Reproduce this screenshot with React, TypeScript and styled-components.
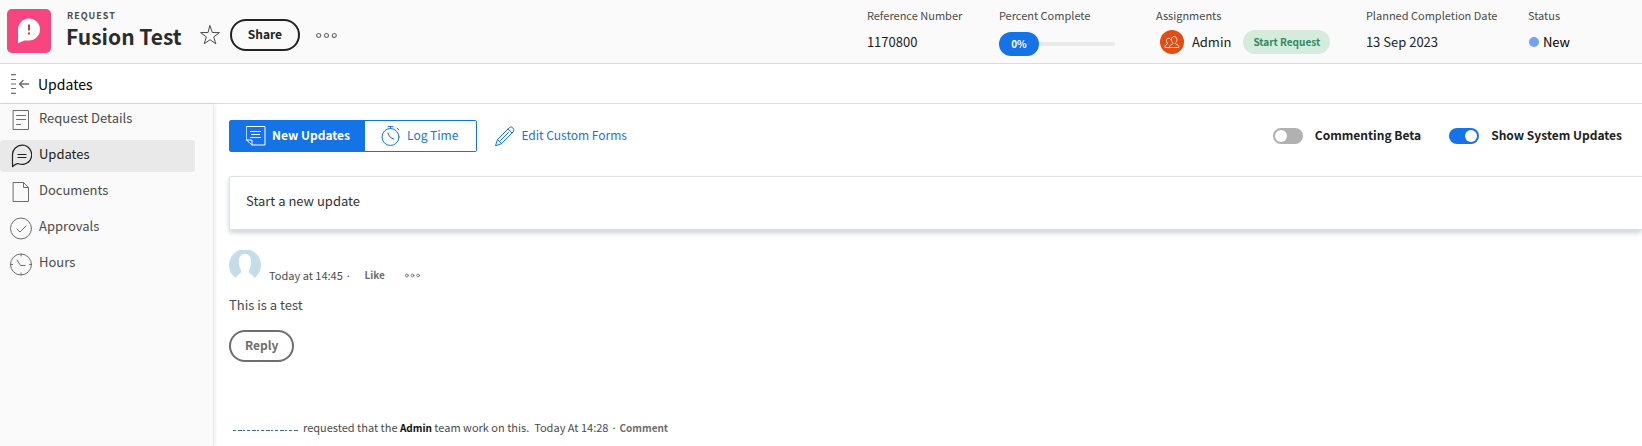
import React from "react";
import styled, { createGlobalStyle } from "styled-components";

const GlobalStyle = createGlobalStyle`
  *, *::before, *::after { box-sizing: border-box; }
  body {
    margin: 0;
    background: #fff;
    color: #4b4b4b;
    font: 13px/20px "Noto Sans CJK JP", "Noto Sans", sans-serif;
  }
  h1, h2, p, ul, dl, dd { margin: 0; padding: 0; }
  ul { list-style: none; }
  button {
    margin: 0;
    padding: 0;
    border: 0;
    background: none;
    color: inherit;
    font: inherit;
    cursor: pointer;
  }
  a { color: inherit; text-decoration: none; }
  svg { display: block; flex: none; }
`;

const Page = styled.div`
  display: flex;
  flex-direction: column;
  min-height: 100vh;
  overflow-x: hidden;
`;

const Header = styled.header`
  display: flex;
  align-items: flex-start;
  justify-content: space-between;
  height: 64px;
  padding: 0 72px 0 7px;
  background: #fafafa;
  border-bottom: 1px solid #dcdcdc;
`;

const Identity = styled.div`
  display: flex;
  align-items: center;
  height: 64px;
`;

const Logo = styled.span`
  display: grid;
  place-items: center;
  width: 44px;
  height: 44px;
  margin: 0 15px 2px 0;
  border-radius: 5px;
  background: #f6457f;
`;

const TitleBlock = styled.div`
  padding-bottom: 5px;
  white-space: nowrap;
`;

const Kind = styled.p`
  padding-left: 1px;
  font-size: 9px;
  font-weight: 700;
  line-height: 14px;
  letter-spacing: 1px;
`;

const Title = styled.h1`
  color: #2c2c2c;
  font-size: 21px;
  font-weight: 700;
  line-height: 27px;
`;

const Actions = styled.div`
  display: flex;
  align-items: center;
  padding-top: 6px;
`;

const IconButton = styled.button<{ $gap: number }>`
  display: grid;
  place-items: center;
  min-height: 14px;
  margin-left: ${(p) => p.$gap}px;
  color: #6e6e6e;
`;

const PillButton = styled.button<{ $strong?: boolean }>`
  height: 32px;
  margin-left: ${(p) => (p.$strong ? 10 : 0)}px;
  padding: 0 ${(p) => (p.$strong ? 16 : 14)}px 2px;
  border: 2px solid ${(p) => (p.$strong ? "#222" : "#6e6e6e")};
  border-radius: 16px;
  color: ${(p) => (p.$strong ? "#222" : "#6e6e6e")};
  font-size: 12px;
  font-weight: 700;
`;

const Facts = styled.dl`
  display: flex;
  padding-top: 5px;
  white-space: nowrap;
`;

const Fact = styled.div<{ $width?: number }>`
  width: ${(p) => (p.$width ? `${p.$width}px` : "auto")};
`;

const FactLabel = styled.dt`
  font-size: 11px;
  line-height: 20px;
`;

const FactValue = styled.dd`
  display: flex;
  align-items: center;
  height: 34px;
  color: #222;
`;

const Progress = styled.div`
  display: flex;
  align-items: center;
  width: 116px;
  padding-top: 4px;
`;

const ProgressBadge = styled.span`
  width: 40px;
  height: 24px;
  border-radius: 12px;
  background: #1473e6;
  color: #fff;
  font-size: 10px;
  font-weight: 700;
  line-height: 23px;
  text-align: center;
`;

const ProgressTrack = styled.span`
  flex: 1;
  height: 4px;
  border-radius: 0 2px 2px 0;
  background: #e9e9e9;
`;

const TeamAvatar = styled.span`
  display: grid;
  place-items: center;
  width: 24px;
  height: 24px;
  margin: 0 8px 0 4px;
  border-radius: 50%;
  background: #e34c13;
  color: #fff;
`;

const StartButton = styled.button`
  height: 24px;
  margin-left: 12px;
  padding: 0 10px;
  border-radius: 12px;
  background: #d5ecdc;
  color: #2d8a68;
  font-size: 10px;
  font-weight: 700;
`;

const StatusDot = styled.span`
  width: 10px;
  height: 10px;
  margin: 0 4px 0 1px;
  border-radius: 50%;
  background: #74a1f7;
`;

const StatusName = styled.span`
  color: #000;
`;

const SectionBar = styled.div`
  display: flex;
  align-items: center;
  height: 40px;
  padding-left: 10px;
  border-bottom: 1px solid #dcdcdc;
  color: #6e6e6e;
`;

const SectionTitle = styled.h2`
  margin-left: 8px;
  color: #000;
  font-size: 14px;
  font-weight: 400;
`;

const Body = styled.div`
  display: flex;
  flex: 1;
`;

const Sidebar = styled.nav`
  width: 214px;
  flex: none;
  background: #fafafa;
  border-right: 1px solid #eaeaea;
  box-shadow: 1px 0 4px rgba(0, 0, 0, 0.08);
`;

const NavLink = styled.a<{ $active?: boolean }>`
  display: flex;
  align-items: center;
  gap: 7px;
  height: 32px;
  margin: 0 18px 4px 0;
  padding-left: 9px;
  border-radius: 4px;
  background: ${(p) => (p.$active ? "#e9e9e9" : "none")};
  color: ${(p) => (p.$active ? "#222" : "#4b4b4b")};

  svg { color: ${(p) => (p.$active ? "#222" : "#6e6e6e")}; }
  span { padding-bottom: 5px; }
`;

const Main = styled.main`
  flex: 1;
  min-width: 0;
  padding: 16px 0 0 15px;
`;

const Toolbar = styled.div`
  display: flex;
  align-items: center;
  height: 32px;
  padding-right: 20px;
  font-size: 12px;
  white-space: nowrap;
`;

const Tabs = styled.div`
  display: flex;
  border: 1px solid #1473e6;
  border-radius: 2px;
`;

const Tab = styled.button<{ $active?: boolean }>`
  display: flex;
  align-items: center;
  gap: 6px;
  height: 30px;
  padding: 0 ${(p) => (p.$active ? 15 : 18)}px 0 16px;
  background: ${(p) => (p.$active ? "#1473e6" : "#fff")};
  color: ${(p) => (p.$active ? "#fff" : "#1473e6")};
  font-weight: ${(p) => (p.$active ? 700 : 400)};

  span { padding-bottom: 2px; }
`;

const EditLink = styled.a`
  display: flex;
  align-items: center;
  gap: 6px;
  margin: 0 auto 0 18px;
  color: #1473e6;

  span { padding-bottom: 2px; }
`;

const ToggleLabel = styled.label`
  display: flex;
  align-items: center;
  gap: 12px;
  margin-left: 28px;
  color: #222;
  font-weight: 700;

  span { padding-bottom: 2px; }
`;

const Switch = styled.input`
  appearance: none;
  display: flex;
  width: 30px;
  height: 16px;
  margin: 0;
  padding: 2px;
  border-radius: 8px;
  background: #b1b1b1;

  &::before {
    content: "";
    width: 12px;
    height: 12px;
    border-radius: 50%;
    background: #fff;
  }
  &:checked { justify-content: flex-end; background: #1473e6; }
`;

const UpdateInput = styled.input`
  display: block;
  width: 100%;
  height: 54px;
  margin-top: 24px;
  padding: 0 16px 6px;
  border: 1px solid #dfe2e4;
  border-right: 0;
  border-radius: 2px 0 0 2px;
  outline: 0;
  background: #fff;
  box-shadow: 0 3px 5px #cdd4d9;
  color: #323232;
  font: inherit;

  &::placeholder { color: #323232; opacity: 1; }
`;

const Comment = styled.article`
  margin-top: 20px;
`;

const CommentHeader = styled.div`
  display: flex;
  align-items: flex-end;
  height: 32px;
  font-size: 11px;
  line-height: 14px;
`;

const CommentTime = styled.time`
  margin-left: 8px;
`;

const TextButton = styled.button<{ $gap: number }>`
  margin-left: ${(p) => p.$gap}px;
  color: #6e6e6e;
  font-size: 10px;
  font-weight: 700;
`;

const CommentText = styled.p`
  margin: 13px 0 15px;
`;

const SystemUpdate = styled.p`
  display: flex;
  margin-top: 55px;
  font-size: 11px;
  white-space: pre;

  strong { color: #111; font-size: 10px; }
`;

const HiddenName = styled.a`
  width: 69px;
  margin-right: 5px;
  padding: 13px 0 0 3px;
  color: #35708f;
`;

const line = { fill: "none", stroke: "currentColor", strokeLinecap: "round", strokeLinejoin: "round" } as const;

const MoreIcon = ({ width }: { width: number }) => (
  <svg width={width} height={width / 3} viewBox="0 0 21 7" {...line} strokeWidth="1.2">
    <circle cx="2.7" cy="3.5" r="2" /><circle cx="10.5" cy="3.5" r="2" /><circle cx="18.3" cy="3.5" r="2" />
  </svg>
);

const RequestIcon = () => (
  <svg width="24" height="26" viewBox="0 0 24 26">
    <path d="M12 0.5a11 11 0 1 1 0 22H7.4L1 25.3V11.5A11 11 0 0 1 12 .5Z" fill="#fff" />
    <path d="M12 6.5v6M12 14.5v2" stroke="#c8413a" strokeWidth="2" />
  </svg>
);

const StarIcon = () => (
  <svg width="20" height="20" viewBox="0 0 20 20" {...line} stroke="#4b4b4b">
    <path d="M10 .8l2.3 6.7 7.1.1-5.7 4.3 2.1 6.9-5.8-4.1-5.8 4.1 2.1-6.9L.6 7.600l7.100-.1Z" />
  </svg>
);

const CollapseIcon = () => (
  <svg width="20" height="20" viewBox="0 0 20 20" {...line}>
    <path d="M1 .6h5M1 5.500h5M1 10h5M1 14.500h5M1 19.400h5" strokeLinecap="butt" strokeWidth="1.2" />
    <path d="M18.500 10h-9M13 6.500 9.500 10l3.500 3.500" strokeWidth="1.4" />
  </svg>
);

const TeamIcon = () => (
  <svg width="16" height="14" viewBox="0 0 16 14" {...line} strokeWidth=".8">
    <path d="M5.500 12.500h9.300c0-2-.8-2.700-2.600-3.200-.9-.3-.8-1.300-.2-1.900C13.600 5.500 13.200 1.500 10.200 1.500S6.800 5.500 8.400 7.400c.6.600.7 1.600-.2 1.900-1.800.500-2.700 1.200-2.700 3.200Z" />
    <path d="M5.500 12.500H1c0-1.900.4-2.700 1.900-3.200.8-.3.700-1 .2-1.600C1.900 6.200 2.100 3.200 4.500 3.200c1.200 0 1.900.7 2.200 1.700" />
  </svg>
);

const DetailsIcon = () => (
  <svg width="23" height="22" viewBox="0 0 23 22" {...line}>
    <path d="M4.500 1.500h15v19h-15ZM7.500 6.500h9M7.500 10.500h9M7.500 15.500h4" />
  </svg>
);

const UpdatesIcon = () => (
  <svg width="23" height="24" viewBox="0 0 23 24" {...line} strokeWidth="1.2">
    <path d="M3.500 22.500V11.500A9.600 9.600 0 1 1 9.500 19.700Q7.500 19 3.500 22.500ZM9 10.500h8M9 13.500h8" />
  </svg>
);

const DocumentIcon = () => (
  <svg width="23" height="22" viewBox="0 0 23 22" {...line}>
    <path d="M4.500 1.500h10l5 5v14h-15ZM14.500 1.500v5h5" />
  </svg>
);

const ApprovalIcon = () => (
  <svg width="23" height="24" viewBox="0 0 23 24" {...line}>
    <circle cx="12" cy="12.5" r="10.5" /><path d="m8 13 3 3 6-6" />
  </svg>
);

const ClockIcon = () => (
  <svg width="23" height="24" viewBox="0 0 23 24" {...line}>
    <circle cx="12" cy="12.5" r="10.5" />
    <path d="M8 8l3.500 5.500H16M12 2v2M12 21v2M1.500 12.500h2M20.500 12.500h2" />
  </svg>
);

const NoteIcon = () => (
  <svg width="20" height="20" viewBox="0 0 20 20" {...line}>
    <path d="M.5.500h18.500v18.500H6L.5 14ZM.5 14H6v5M4.500 5.500h10M5.500 8.500h8M4.500 11.500h10" />
  </svg>
);

const StopwatchIcon = () => (
  <svg width="20" height="20" viewBox="0 0 20 20" {...line}>
    <circle cx="9.5" cy="11" r="8.5" /><path d="M7 .6h5M9.500 .6v2M16 2l2 2M7 7q1 5 6 6" />
  </svg>
);

const PencilIcon = () => (
  <svg width="20" height="20" viewBox="0 0 20 20" {...line}>
    <path d="M.6 19.400 2.500 13.500 14.500 1.500q1.500-1.500 3.300.3t.700 3.700L6.500 17.500ZM2.500 13.500l4 4M13 3l4 4M5.500 14.500l8-8" />
  </svg>
);

const PersonAvatar = () => (
  <svg width="32" height="32" viewBox="0 0 32 32" role="img" aria-label="User avatar">
    <path d="M6.500 28A16 16 0 1 1 25.500 28Q23.500 24.500 21 23.500C19 22.500 20 20 21 18c1.500-3 3-14-5-14S9.500 15 11 18c1 2 2 4.500 0 5.500Q8.500 24.500 6.500 28Z" fill="#c5dcea" />
  </svg>
);

const navItems = [
  { label: "Request Details", icon: <DetailsIcon /> },
  { label: "Updates", icon: <UpdatesIcon />, active: true },
  { label: "Documents", icon: <DocumentIcon /> },
  { label: "Approvals", icon: <ApprovalIcon /> },
  { label: "Hours", icon: <ClockIcon /> },
];

export default function App() {
  return (
    <Page>
      <GlobalStyle />
      <Header>
        <Identity>
          <Logo><RequestIcon /></Logo>
          <TitleBlock>
            <Kind>REQUEST</Kind>
            <Title>Fusion Test</Title>
          </TitleBlock>
          <Actions>
            <IconButton $gap={18} aria-label="Add to favorites"><StarIcon /></IconButton>
            <PillButton $strong>Share</PillButton>
            <IconButton $gap={16} aria-label="More"><MoreIcon width={21} /></IconButton>
          </Actions>
        </Identity>
        <Facts>
          <Fact $width={132}>
            <FactLabel>Reference Number</FactLabel>
            <FactValue>1170800</FactValue>
          </Fact>
          <Fact $width={157}>
            <FactLabel>Percent Complete</FactLabel>
            <FactValue>
              <Progress><ProgressBadge>0%</ProgressBadge><ProgressTrack /></Progress>
            </FactValue>
          </Fact>
          <Fact $width={210}>
            <FactLabel>Assignments</FactLabel>
            <FactValue>
              <TeamAvatar><TeamIcon /></TeamAvatar>
              Admin
              <StartButton>Start Request</StartButton>
            </FactValue>
          </Fact>
          <Fact $width={162}>
            <FactLabel>Planned Completion Date</FactLabel>
            <FactValue>13 Sep 2023</FactValue>
          </Fact>
          <Fact>
            <FactLabel>Status</FactLabel>
            <FactValue><StatusDot /><StatusName>New</StatusName></FactValue>
          </Fact>
        </Facts>
      </Header>
      <SectionBar>
        <IconButton $gap={0} aria-label="Collapse navigation"><CollapseIcon /></IconButton>
        <SectionTitle>Updates</SectionTitle>
      </SectionBar>
      <Body>
        <Sidebar>
          <ul>
            {navItems.map((item) => (
              <li key={item.label}>
                <NavLink href="#" $active={item.active}>{item.icon}<span>{item.label}</span></NavLink>
              </li>
            ))}
          </ul>
        </Sidebar>
        <Main>
          <Toolbar>
            <Tabs>
              <Tab $active><NoteIcon /><span>New Updates</span></Tab>
              <Tab><StopwatchIcon /><span>Log Time</span></Tab>
            </Tabs>
            <EditLink href="#"><PencilIcon /><span>Edit Custom Forms</span></EditLink>
            <ToggleLabel><Switch type="checkbox" /><span>Commenting Beta</span></ToggleLabel>
            <ToggleLabel><Switch type="checkbox" defaultChecked /><span>Show System Updates</span></ToggleLabel>
          </Toolbar>
          <UpdateInput aria-label="Start a new update" placeholder="Start a new update" />
          <Comment>
            <CommentHeader>
              <PersonAvatar />
              <CommentTime>Today at 14:45 ·</CommentTime>
              <TextButton $gap={13}>Like</TextButton>
              <IconButton $gap={20} aria-label="More comment actions"><MoreIcon width={15} /></IconButton>
            </CommentHeader>
            <CommentText>This is a test</CommentText>
            <PillButton>Reply</PillButton>
          </Comment>
          <SystemUpdate>
            <HiddenName href="#" aria-label="Requester">
              <svg width="66" height="2" viewBox="0 0 66 2" fill="none" stroke="currentColor">
                <path d="M1 .5h65" strokeDasharray="3 2 4 1 2 2" />
              </svg>
            </HiddenName>
            <span>requested that the <strong>Admin</strong> team work on this.  Today At 14:28 · </span>
            <TextButton $gap={0}>Comment</TextButton>
          </SystemUpdate>
        </Main>
      </Body>
    </Page>
  );
}
